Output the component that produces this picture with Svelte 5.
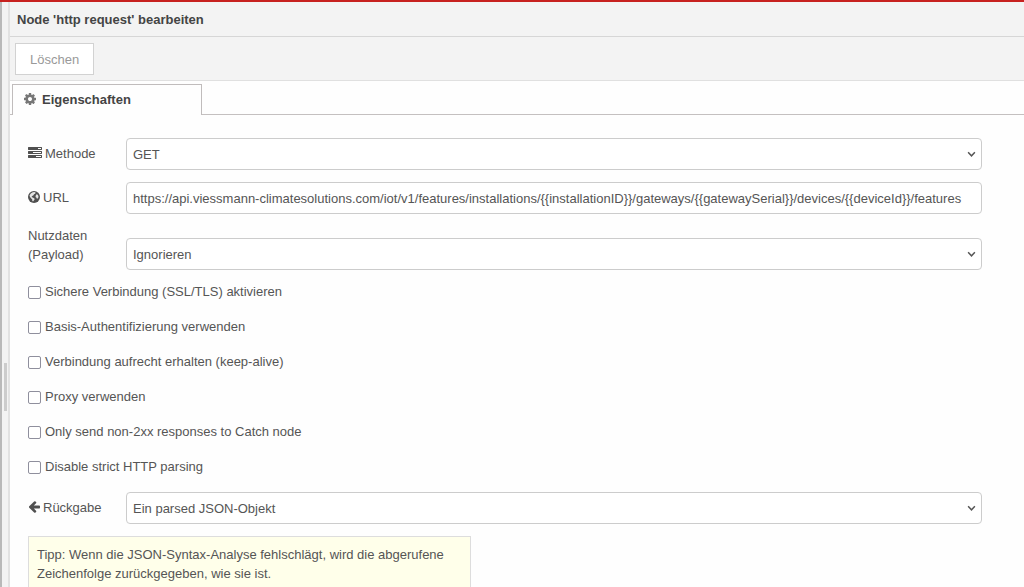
<script>
  let method = $state('GET');
  let url = $state(
    'https://api.viessmann-climatesolutions.com/iot/v1/features/installations/{{installationID}}/gateways/{{gatewaySerial}}/devices/{{deviceId}}/features'
  );
  let payload = $state('Ignorieren');
  let result = $state('Ein parsed JSON-Objekt');

  let options = $state([
    { label: 'Sichere Verbindung (SSL/TLS) aktivieren', checked: false },
    { label: 'Basis-Authentifizierung verwenden', checked: false },
    { label: 'Verbindung aufrecht erhalten (keep-alive)', checked: false },
    { label: 'Proxy verwenden', checked: false },
    { label: 'Only send non-2xx responses to Catch node', checked: false },
    { label: 'Disable strict HTTP parsing', checked: false }
  ]);
</script>

{#snippet chevron()}
  <svg class="chevron" viewBox="0 0 8 6" aria-hidden="true">
    <path d="M1 1l3 3.2L7 1" fill="none" stroke="currentColor" stroke-width="1.3" />
  </svg>
{/snippet}

<div class="editor">
  <div class="workspace-edge"></div>
  <div class="separator"><span class="grip"></span></div>

  <main class="tray">
    <header class="title">Node 'http request' bearbeiten</header>
    <div class="toolbar">
      <button type="button" class="delete">Löschen</button>
    </div>

    <div class="tabs" role="tablist">
      <button type="button" class="tab" role="tab" aria-selected="true">
        <svg class="cog" viewBox="128 128 1536 1536" aria-hidden="true">
          <path d="M1152 896q0-106-75-181t-181-75-181 75-75 181 75 181 181 75 181-75 75-181zm512-109v222q0 12-8 23t-20 13l-185 28q-19 54-39 91 35 50 107 138 10 12 10 25t-9 23q-27 37-99 108t-94 71q-12 0-26-9l-138-108q-44 23-91 38-16 136-29 186-7 28-36 28h-222q-14 0-24.5-8.5t-11.5-21.5l-28-184q-49-16-90-37l-141 107q-10 9-25 9-14 0-25-11-126-114-165-168-7-10-7-23 0-12 8-23 15-21 51-66.5t54-70.5q-27-50-41-99l-183-27q-13-2-21-12.5t-8-23.5v-222q0-12 8-23t19-13l186-28q14-46 39-92-40-57-107-138-10-12-10-24 0-10 9-23 26-36 98.5-107.5t94.5-71.5q13 0 26 10l138 107q44-23 91-38 16-136 29-186 7-28 36-28h222q14 0 24.5 8.5t11.5 21.5l28 184q49 16 90 37l142-107q9-9 24-9 13 0 25 10 129 119 165 170 7 8 7 22 0 12-8 23-15 21-51 66.5t-54 70.5q26 50 41 98l183 28q13 2 21 12.5t8 23.5z" />
        </svg>
        Eigenschaften
      </button>
    </div>

    <form class="form" onsubmit={(e) => e.preventDefault()}>
      <div class="row">
        <label for="method">
          <svg class="icon wide" viewBox="0 128 1792 1536" aria-hidden="true">
            <path d="M1024 1408h640v-128h-640v128zm-384-512h1024v-128h-1024v128zm640-512h384v-128h-384v128zm512 832v256q0 26-19 45t-45 19h-1664q-26 0-45-19t-19-45v-256q0-26 19-45t45-19h1664q26 0 45 19t19 45zm0-512v256q0 26-19 45t-45 19h-1664q-26 0-45-19t-19-45v-256q0-26 19-45t45-19h1664q26 0 45 19t19 45zm0-512v256q0 26-19 45t-45 19h-1664q-26 0-45-19t-19-45v-256q0-26 19-45t45-19h1664q26 0 45 19t19 45z" />
          </svg>Methode
        </label>
        <div class="field">
          <select id="method" bind:value={method}>
            <option>GET</option>
            <option>POST</option>
            <option>PUT</option>
            <option>DELETE</option>
            <option>PATCH</option>
          </select>
          {@render chevron()}
        </div>
      </div>

      <div class="row">
        <label for="url">
          <svg class="icon" viewBox="0 0 24 24" aria-hidden="true">
            <circle cx="12" cy="12" r="12" />
            <path class="land" d="M9.500 2.500l3.500-.5 2.500 1.500-1.500 2-2 1-1 2-2.500 1.500L7 12l2.500 1 2.500 1.500 1.500 1.500-1.500 2.500-2 2.500-1.500-1.500V17l-2-2-2.500-3L3 9l2.500-4zM17 6.500l2.500 1 1.500 3-.5 3-2.500 2.500-1-2.500-2-1.500.500-3z" />
          </svg>URL
        </label>
        <div class="field">
          <input id="url" type="text" bind:value={url} spellcheck="false" />
        </div>
      </div>

      <div class="row">
        <label for="payload">Nutzdaten (Payload)</label>
        <div class="field low">
          <select id="payload" bind:value={payload}>
            <option>Ignorieren</option>
            <option>An url als Query-Parameter anfügen</option>
            <option>Als Body der Anforderung senden</option>
          </select>
          {@render chevron()}
        </div>
      </div>

      {#each options as option, i}
        <div class="check">
          <input id="option-{i}" type="checkbox" bind:checked={option.checked} />
          <label for="option-{i}">{option.label}</label>
        </div>
      {/each}

      <div class="row">
        <label for="result">
          <svg class="icon" viewBox="64 160 1600 1600" aria-hidden="true">
            <path d="M1664 896v128q0 53-32.500 90.500t-84.500 37.500h-704l293 294q38 36 38 90t-38 90l-75 76q-37 37-90 37-52 0-91-37l-651-652q-37-37-37-90 0-52 37-91l651-650q38-38 91-38 52 0 90 38l75 74q38 38 38 91t-38 91l-293 293h704q52 0 84.500 37.500t32.500 90.500z" />
          </svg>Rückgabe
        </label>
        <div class="field">
          <select id="result" bind:value={result}>
            <option>Ein UTF-8-String</option>
            <option>Ein binärer Buffer</option>
            <option>Ein parsed JSON-Objekt</option>
          </select>
          {@render chevron()}
        </div>
      </div>

      <p class="tip">
        Tipp: Wenn die JSON-Syntax-Analyse fehlschlägt, wird die abgerufene Zeichenfolge
        zurückgegeben, wie sie ist.
      </p>
    </form>
  </main>
</div>

<style>
  :global(body) {
    margin: 0;
    overflow: hidden;
  }

  .editor {
    display: flex;
    height: 100vh;
    box-sizing: border-box;
    border-top: 2px solid #c7211f;
    background: #fff;
    color: #555;
    font: 13px/19px 'Liberation Sans', Arial, sans-serif;
    overflow: hidden;
  }

  .workspace-edge {
    flex: none;
    width: 2px;
    background: #b9b9b9;
  }

  .separator {
    flex: none;
    display: flex;
    align-items: center;
    width: 6px;
    padding-top: 184px;
    box-sizing: border-box;
    background: #f3f3f3;
  }

  .grip {
    width: 3px;
    height: 48px;
    margin-left: 2px;
    background: #ccc;
  }

  .tray {
    flex: 1;
    min-width: 0;
    border-left: 2px solid #e2e2e2;
    background: #fefefe;
  }

  .title {
    padding: 8px 7px 7px;
    background: #f3f3f3;
    border-bottom: 1px solid #d6d6d6;
    color: #444;
    font-weight: bold;
  }

  .toolbar {
    padding: 6px 5px 5px;
    background: #f3f3f3;
    border-bottom: 1px solid #e0e0e0;
  }

  .delete {
    display: block;
    height: 32px;
    padding: 0 14px;
    border: 1px solid #d2d2d2;
    background: #fff;
    color: #999;
    font: inherit;
  }

  .tabs {
    display: flex;
    padding: 3px 0 0 2px;
    background: linear-gradient(#c4c0c0, #c4c0c0) bottom / 100% 1px no-repeat;
  }

  .tab {
    display: flex;
    align-items: center;
    gap: 6px;
    width: 190px;
    height: 31px;
    padding: 0 11px 2px;
    border: 1px solid #c0bcbc;
    border-bottom: 0;
    background: #fefefe;
    color: #444;
    font: inherit;
    font-weight: bold;
  }

  .cog {
    width: 12px;
    height: 12px;
    fill: #777;
  }

  .form {
    display: flex;
    flex-direction: column;
    gap: 12px;
    padding: 23px 42px 0 18px;
  }

  .row {
    display: flex;
  }

  .row label {
    flex: none;
    width: 98px;
    padding-top: 6px;
    box-sizing: border-box;
  }

  .row label:has(+ .low) {
    padding: 0 20px 0 0;
  }

  .icon {
    width: 12px;
    height: 12px;
    margin-right: 3px;
    vertical-align: -1px;
    fill: #505050;
  }

  .icon.wide {
    width: 14px;
  }

  .land {
    fill: #e4e4e4;
  }

  .field {
    position: relative;
    flex: 1;
    min-width: 0;
  }

  .field.low {
    padding-top: 12px;
  }

  .field select,
  .field input {
    display: block;
    width: 100%;
    height: 32px;
    padding: 0 6px;
    box-sizing: border-box;
    border: 1px solid #ccc;
    border-radius: 4px;
    background: #fff;
    color: #555;
    font: inherit;
    appearance: none;
  }

  .chevron {
    position: absolute;
    right: 6px;
    bottom: 12px;
    width: 9px;
    height: 7px;
    color: #555;
    pointer-events: none;
  }

  .check {
    display: flex;
    align-items: flex-start;
    gap: 4px;
    height: 23px;
  }

  .check input {
    width: 13px;
    height: 13px;
    margin: 4px 0 0;
    border: 1px solid #8f8f9d;
    border-radius: 2px;
    background: #fff;
    appearance: none;
  }

  .check input:checked {
    background: #555;
  }

  .tip {
    max-width: 443px;
    margin: 0;
    padding: 8px 8px 12px;
    box-sizing: border-box;
    border: 1px solid #ddd;
    background: #ffffea;
  }
</style>
